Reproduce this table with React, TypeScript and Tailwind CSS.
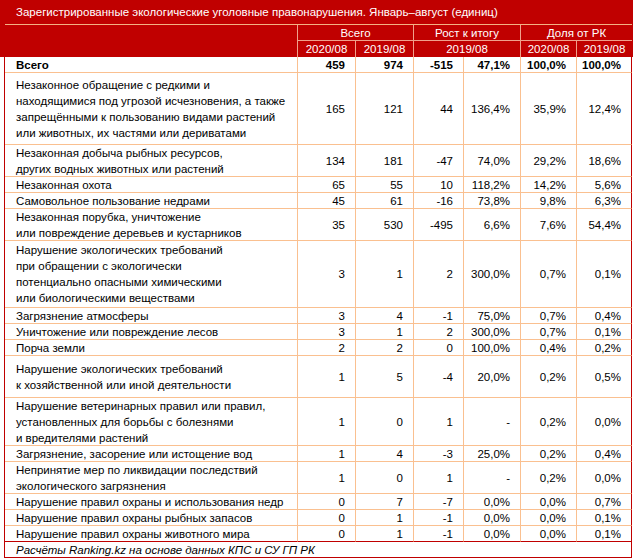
import React from "react";

type Row = { name: string[]; h: string; v: string[] };

const rows: Row[] = [
  {
    name: [
      "Незаконное обращение с редкими и",
      "находящимися под угрозой исчезновения, а также",
      "запрещёнными к пользованию видами растений",
      "или животных, их частями или дериватами",
    ],
    h: "h-[72px]",
    v: ["165", "121", "44", "136,4%", "35,9%", "12,4%"],
  },
  {
    name: ["Незаконная добыча рыбных ресурсов,", "других водных животных или растений"],
    h: "h-[32px]",
    v: ["134", "181", "-47", "74,0%", "29,2%", "18,6%"],
  },
  { name: ["Незаконная охота"], h: "h-[16px]", v: ["65", "55", "10", "118,2%", "14,2%", "5,6%"] },
  { name: ["Самовольное пользование недрами"], h: "h-[16px]", v: ["45", "61", "-16", "73,8%", "9,8%", "6,3%"] },
  {
    name: ["Незаконная порубка, уничтожение", "или повреждение деревьев и кустарников"],
    h: "h-[32px]",
    v: ["35", "530", "-495", "6,6%", "7,6%", "54,4%"],
  },
  {
    name: [
      "Нарушение экологических требований",
      "при обращении с экологически",
      "потенциально опасными химическими",
      "или биологическими веществами",
    ],
    h: "h-[67px]",
    v: ["3", "1", "2", "300,0%", "0,7%", "0,1%"],
  },
  { name: ["Загрязнение атмосферы"], h: "h-[16px]", v: ["3", "4", "-1", "75,0%", "0,7%", "0,4%"] },
  { name: ["Уничтожение или повреждение лесов"], h: "h-[16px]", v: ["3", "1", "2", "300,0%", "0,7%", "0,1%"] },
  { name: ["Порча земли"], h: "h-[16px]", v: ["2", "2", "0", "100,0%", "0,4%", "0,2%"] },
  {
    name: ["Нарушение экологических требований", "к хозяйственной или иной деятельности"],
    h: "h-[42px]",
    v: ["1", "5", "-4", "20,0%", "0,2%", "0,5%"],
  },
  {
    name: [
      "Нарушение ветеринарных правил или правил,",
      "установленных для борьбы с болезнями",
      "и вредителями растений",
    ],
    h: "h-[48px]",
    v: ["1", "0", "1", "-", "0,2%", "0,0%"],
  },
  { name: ["Загрязнение, засорение или истощение вод"], h: "h-[16px]", v: ["1", "4", "-3", "25,0%", "0,2%", "0,4%"] },
  {
    name: ["Непринятие мер по ликвидации последствий", "экологического загрязнения"],
    h: "h-[32px]",
    v: ["1", "0", "1", "-", "0,2%", "0,0%"],
  },
  { name: ["Нарушение правил охраны и использования недр"], h: "h-[16px]", v: ["0", "7", "-7", "0,0%", "0,0%", "0,7%"] },
  { name: ["Нарушение правил охраны рыбных запасов"], h: "h-[16px]", v: ["0", "1", "-1", "0,0%", "0,0%", "0,1%"] },
  { name: ["Нарушение правил охраны животного мира"], h: "h-[16px]", v: ["0", "1", "-1", "0,0%", "0,0%", "0,1%"] },
];

const App = () => {
  return (
    <div className="w-[633px] h-[558px] bg-white text-[11.5px] leading-[16px] text-black font-['Liberation_Sans',Arial,sans-serif] overflow-hidden">
      {/* title */}
      <div className="h-[25px] bg-[#C00000] flex">
        <div className="w-[5px]" />
        <div className="flex-1 mr-[1px] border-b border-[#F4B183] text-white pl-[11px] flex items-center">
          Зарегистрированные экологические уголовные правонарушения. Январь–август (единиц)
        </div>
      </div>

      {/* header */}
      <div className="flex bg-[#C00000] text-white">
        <div className="w-[5px]" />
        <div className="grid grid-cols-[293px_58px_58px_50px_57px_56px_55px] text-center">
          <div className="row-span-2 border-r border-[#F0A08C]" />
          <div className="col-span-2 h-[16px] border-r border-b border-[#F0A08C]">Всего</div>
          <div className="col-span-2 h-[16px] border-r border-b border-[#F0A08C]">Рост к итогу</div>
          <div className="col-span-2 h-[16px] border-b border-[#F0A08C]">Доля от РК</div>
          <div className="h-[16px] border-r border-[#F0A08C]">2020/08</div>
          <div className="h-[16px] border-r border-[#F0A08C]">2019/08</div>
          <div className="col-span-2 h-[16px] border-r border-[#F0A08C]">2019/08</div>
          <div className="h-[16px] border-r border-[#F0A08C]">2020/08</div>
          <div className="h-[16px]">2019/08</div>
        </div>
      </div>

      {/* body */}
      <div className="ml-[4px] w-[628px] border-l border-[#C00000]">
        <div className="grid grid-cols-[293px_58px_58px_50px_57px_56px_55px]">
          <div className="h-[16px] border-r border-b border-[#FAC090] pl-[11px] font-bold">Всего</div>
          {["459", "974", "-515", "47,1%", "100,0%", "100,0%"].map((v, i) => (
            <div
              key={i}
              className={`h-[16px] border-b border-[#FAC090] pr-[10px] text-right font-bold ${
                i === 5 ? "border-r border-r-[#C00000]" : "border-r"
              }`}
            >
              {v}
            </div>
          ))}

          {rows.map((r, ri) => (
            <React.Fragment key={ri}>
              <div
                className={`${r.h} border-r border-b border-[#FAC090] pl-[11px] flex flex-col justify-center ${
                  ri === rows.length - 1 ? "border-b-[#C00000]" : ""
                }`}
              >
                {r.name.map((l, li) => (
                  <div key={li} className="whitespace-nowrap">
                    {l}
                  </div>
                ))}
              </div>
              {r.v.map((v, i) => (
                <div
                  key={i}
                  className={`${r.h} border-b border-[#FAC090] pr-[10px] flex items-center justify-end ${
                    i === 5 ? "border-r border-r-[#C00000]" : "border-r"
                  } ${ri === rows.length - 1 ? "border-b-[#C00000]" : ""}`}
                >
                  {v}
                </div>
              ))}
            </React.Fragment>
          ))}
        </div>

        <div className="h-[16px] border-r border-b border-[#C00000] pl-[11px] italic flex items-center">
          Расчёты Ranking.kz на основе данных КПС и СУ ГП РК
        </div>
      </div>
    </div>
  );
};

export default App;
